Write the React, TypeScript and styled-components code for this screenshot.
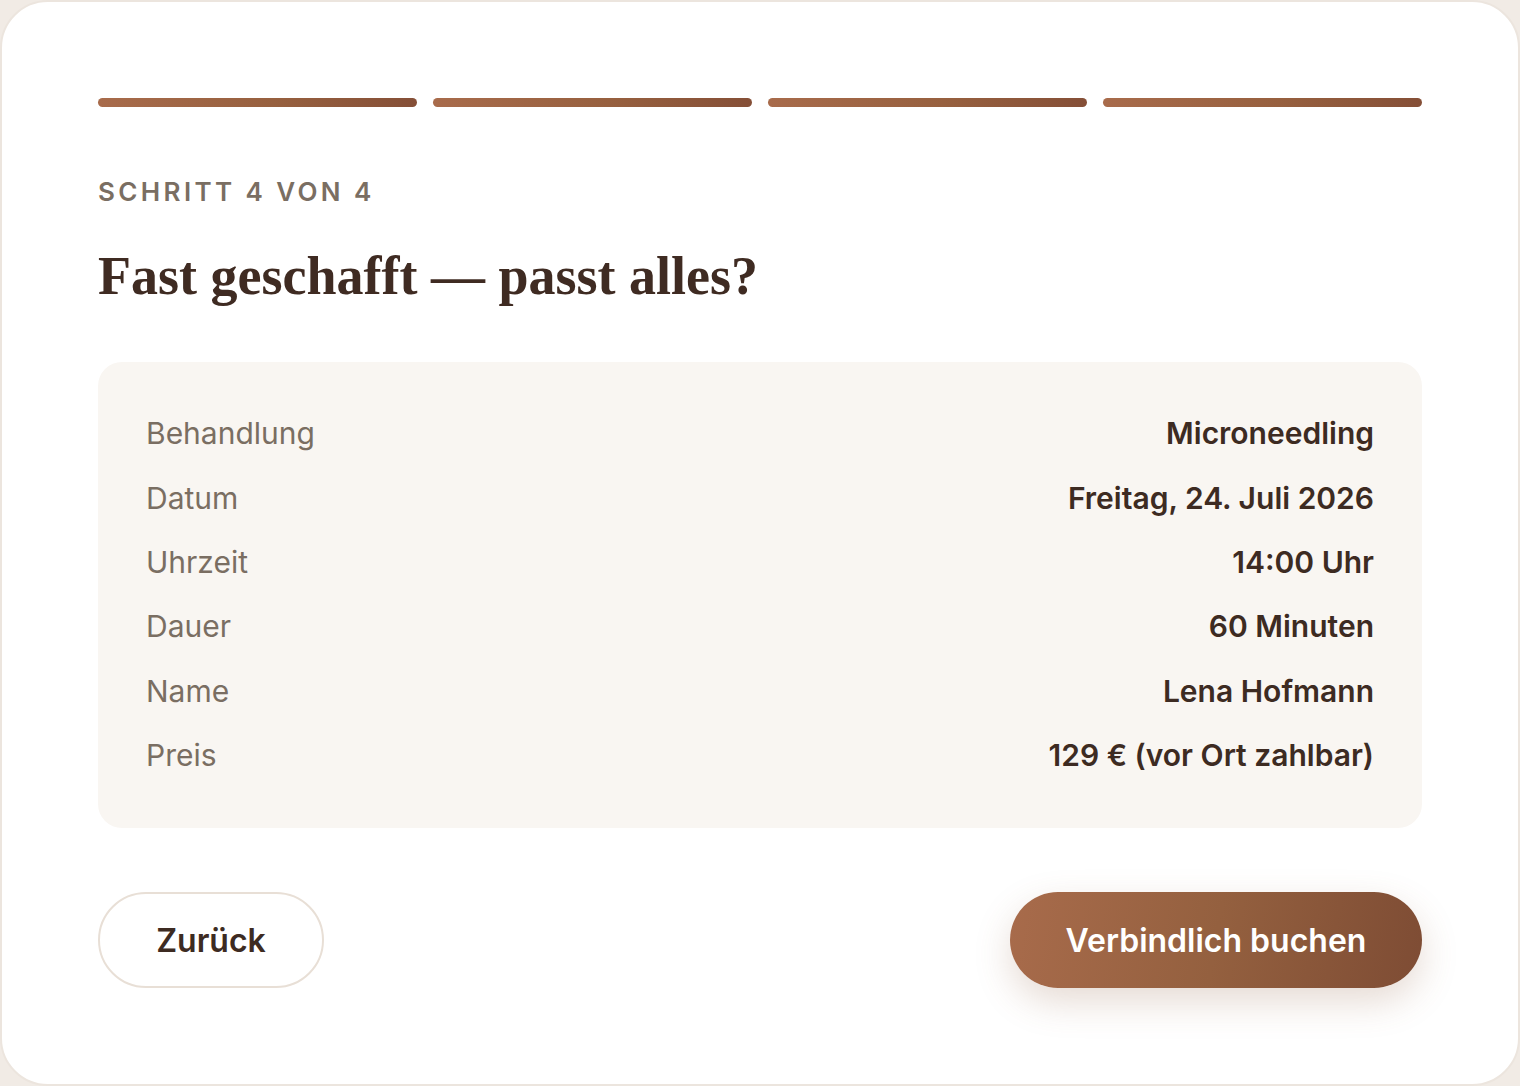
import React from "react";
import styled, { createGlobalStyle } from "styled-components";

const Global = createGlobalStyle`
  html, body { margin: 0; padding: 0; background: #f1ebe5; }
  body { font-family: Inter, "Noto Sans", sans-serif; }
  * { box-sizing: border-box; }
`;

const Card = styled.div`
  width: 1520px;
  height: 1086px;
  background: #ffffff;
  border: 2px solid #ece5de;
  border-radius: 48px;
  padding: 96px 96px 96px 96px;
  display: flex;
  flex-direction: column;
`;

const Progress = styled.div`
  display: grid;
  grid-template-columns: repeat(4, 1fr);
  gap: 16px;
`;

const Segment = styled.div<{ $active: boolean }>`
  height: 9px;
  border-radius: 6px;
  background: ${(p) =>
    p.$active ? "linear-gradient(90deg, #a86b4b 0%, #97603f 55%, #854f37 100%)" : "#efe8e1"};
`;

const Step = styled.div`
  margin-top: 69px;
  font-family: Inter, sans-serif;
  font-weight: 600;
  font-size: 26px;
  letter-spacing: 0.13em;
  color: #7a6e62;
  line-height: 32px;
`;

const Title = styled.h1`
  margin: 36px 0 0;
  font-family: "Liberation Serif", "DejaVu Serif", serif;
  font-weight: 700;
  font-size: 54px;
  line-height: 64px;
  letter-spacing: 0;
  color: #3f2b22;
`;

const Summary = styled.div`
  margin-top: 54px;
  background: #f9f6f2;
  border-radius: 24px;
  padding: 39px 48px 41px;
  display: flex;
  flex-direction: column;
`;

const Row = styled.div`
  display: flex;
  justify-content: space-between;
  align-items: center;
  height: 64.4px;
`;

const Label = styled.span`
  font-size: 30px;
  color: #7a6e62;
  font-weight: 400;
`;

const Value = styled.span`
  font-size: 30px;
  color: #3d2b22;
  font-weight: 600;
`;

const Actions = styled.div`
  margin-top: 64px;
  display: flex;
  justify-content: space-between;
  align-items: center;
`;

const BackButton = styled.button`
  height: 96px;
  width: 226px;
  border-radius: 48px;
  border: 2px solid #e8dfd6;
  background: #ffffff;
  font-family: Inter, sans-serif;
  font-size: 32px;
  font-weight: 600;
  color: #3d2b22;
  cursor: pointer;
`;

const PrimaryButton = styled.button`
  height: 96px;
  width: 412px;
  border-radius: 48px;
  border: none;
  background: linear-gradient(100deg, #a86b4b 0%, #94603f 50%, #7e4c34 100%);
  box-shadow: 0 14px 36px rgba(140, 90, 60, 0.22);
  font-family: Inter, sans-serif;
  font-size: 32px;
  font-weight: 600;
  color: #ffffff;
  cursor: pointer;
`;

const rows: [string, string][] = [
  ["Behandlung", "Microneedling"],
  ["Datum", "Freitag, 24. Juli 2026"],
  ["Uhrzeit", "14:00 Uhr"],
  ["Dauer", "60 Minuten"],
  ["Name", "Lena Hofmann"],
  ["Preis", "129 € (vor Ort zahlbar)"],
];

export default function App() {
  return (
    <>
      <Global />
      <Card>
        <Progress>
          {[0, 1, 2, 3].map((i) => (
            <Segment key={i} $active />
          ))}
        </Progress>
        <Step>SCHRITT 4 VON 4</Step>
        <Title>Fast geschafft — passt alles?</Title>
        <Summary>
          {rows.map(([l, v]) => (
            <Row key={l}>
              <Label>{l}</Label>
              <Value>{v}</Value>
            </Row>
          ))}
        </Summary>
        <Actions>
          <BackButton>Zurück</BackButton>
          <PrimaryButton>Verbindlich buchen</PrimaryButton>
        </Actions>
      </Card>
    </>
  );
}
